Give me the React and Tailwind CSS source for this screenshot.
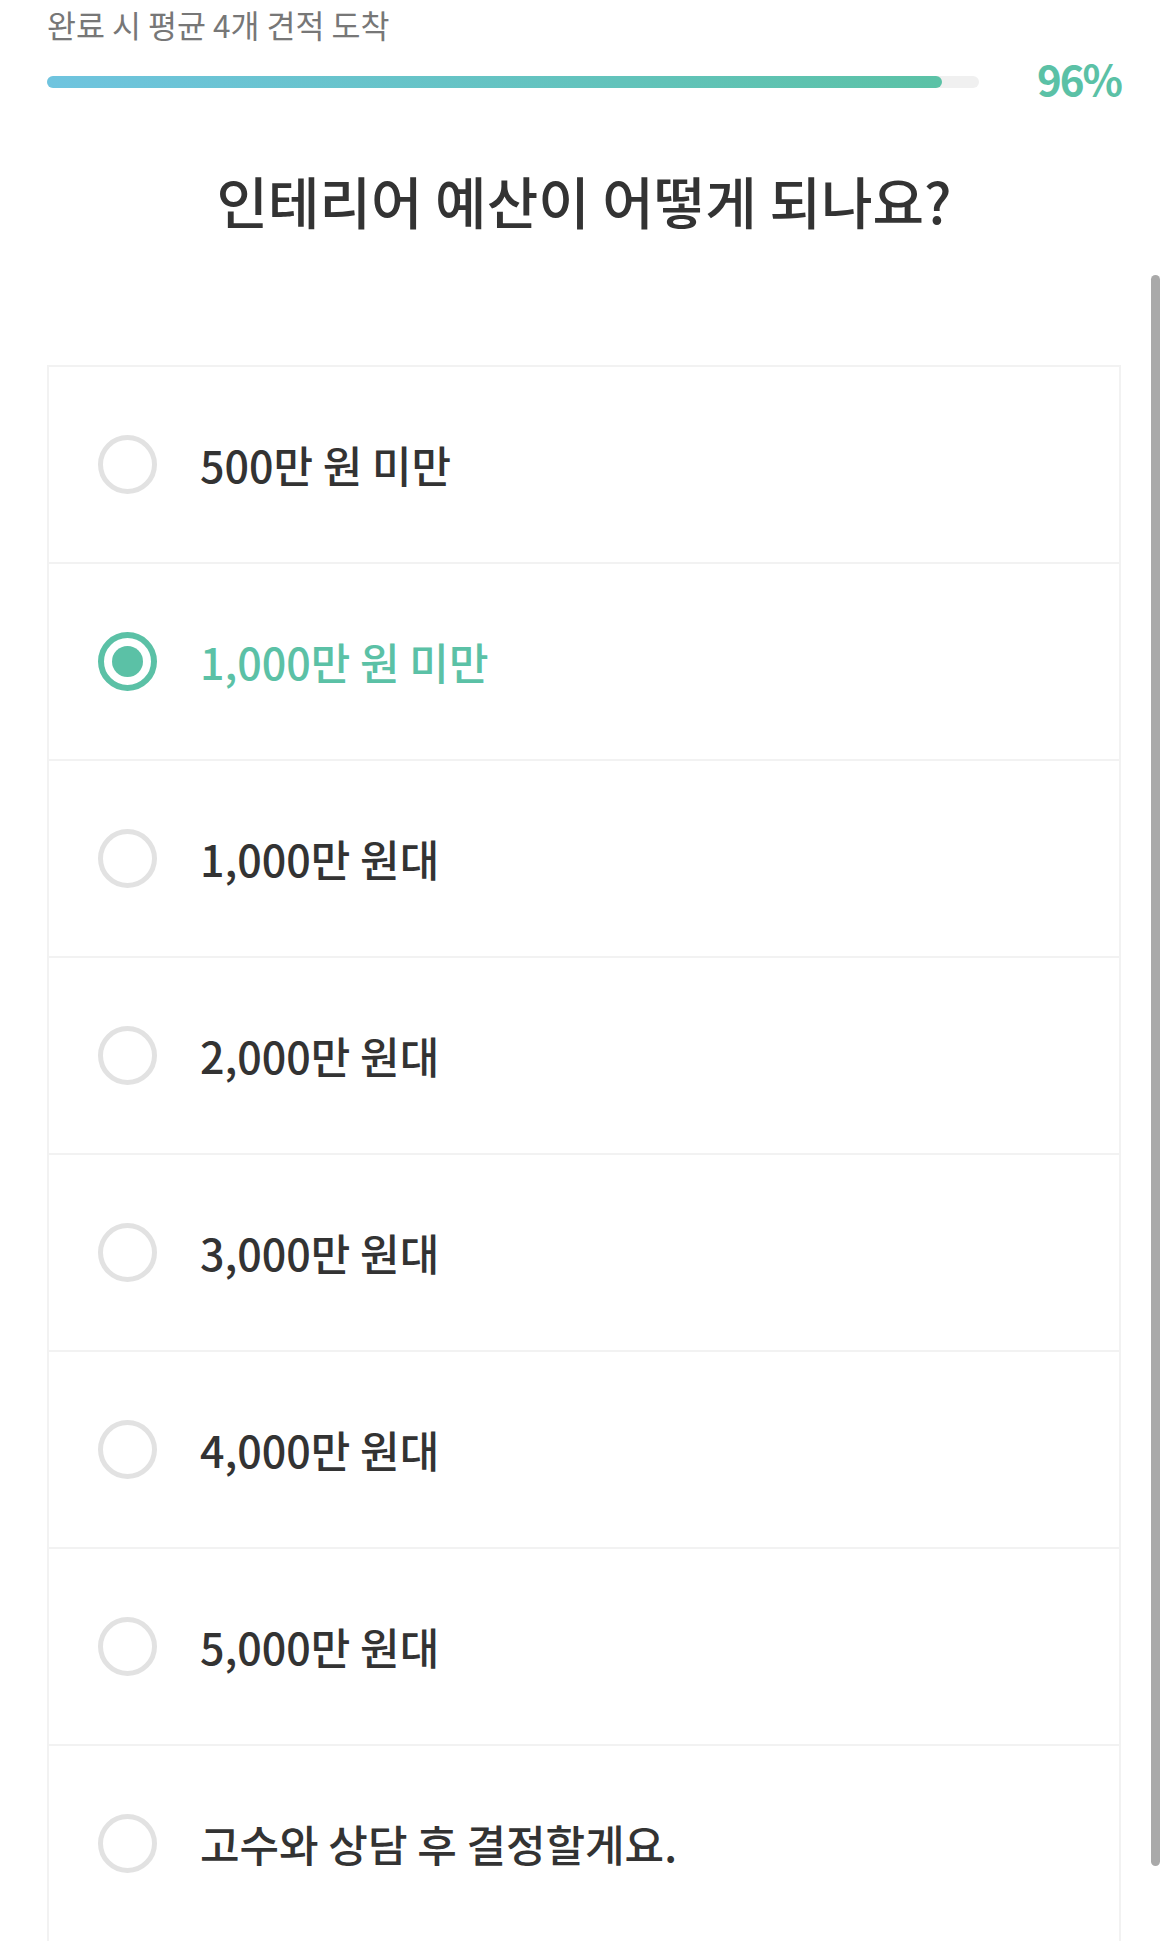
import { useState } from "react";

const options = [
  "500만 원 미만",
  "1,000만 원 미만",
  "1,000만 원대",
  "2,000만 원대",
  "3,000만 원대",
  "4,000만 원대",
  "5,000만 원대",
  "고수와 상담 후 결정할게요.",
];

const Radio = ({ checked }) =>
  checked ? (
    <span className="flex h-[59px] w-[59px] shrink-0 items-center justify-center rounded-full border-[6px] border-[#5bc1a6]">
      <span className="h-[31px] w-[31px] rounded-full bg-[#5bc1a6]" />
    </span>
  ) : (
    <span className="h-[59px] w-[59px] shrink-0 rounded-full border-[5px] border-[#e2e2e2]" />
  );

const App = () => {
  const [selected, setSelected] = useState(1);

  return (
    <div className="relative min-h-[1941px] bg-white font-['Noto_Sans_CJK_KR','Noto_Sans',sans-serif]">
      <div className="pl-[47px] pr-[48px]">
        {/* progress header */}
        <p className="pt-[5px] text-[31.5px] leading-[38px] text-[#777777]">완료 시 평균 4개 견적 도착</p>
        <div className="mt-[11px] flex items-center">
          <div className="h-[12px] w-[932px] rounded-full bg-[#f0f0f0]">
            <div className="h-full w-[96%] rounded-full bg-gradient-to-r from-[#6fc4df] to-[#5bc2a6]" />
          </div>
          <span className="ml-auto -translate-y-[4px] text-[42px] font-bold leading-[56px] tracking-[-2px] text-[#5bc1a6]">96%</span>
        </div>

        <h1 className="mt-[55px] text-center text-[56px] font-medium leading-[70px] text-[#333333]">
          인테리어 예산이 어떻게 되나요?
        </h1>

        {/* options */}
        <ul className="mt-[130px] border-x-2 border-t-2 border-[#f2f2f2]">
          {options.map((label, i) => (
            <li
              key={label}
              onClick={() => setSelected(i)}
              className="flex h-[197px] cursor-pointer items-center gap-[43px] border-b-2 border-[#f2f2f2] pl-[49px]"
            >
              <Radio checked={selected === i} />
              <span
                className={
                  selected === i
                    ? "text-[43px] font-medium text-[#5bc1a6]"
                    : "text-[43px] font-medium text-[#333333]"
                }
              >
                {label}
              </span>
            </li>
          ))}
        </ul>
      </div>

      {/* overlay scrollbar */}
      <div className="absolute left-[1151px] top-[275px] h-[1591px] w-[9px] rounded-full bg-[#a9a9a9]" />
    </div>
  );
};

export default App;
